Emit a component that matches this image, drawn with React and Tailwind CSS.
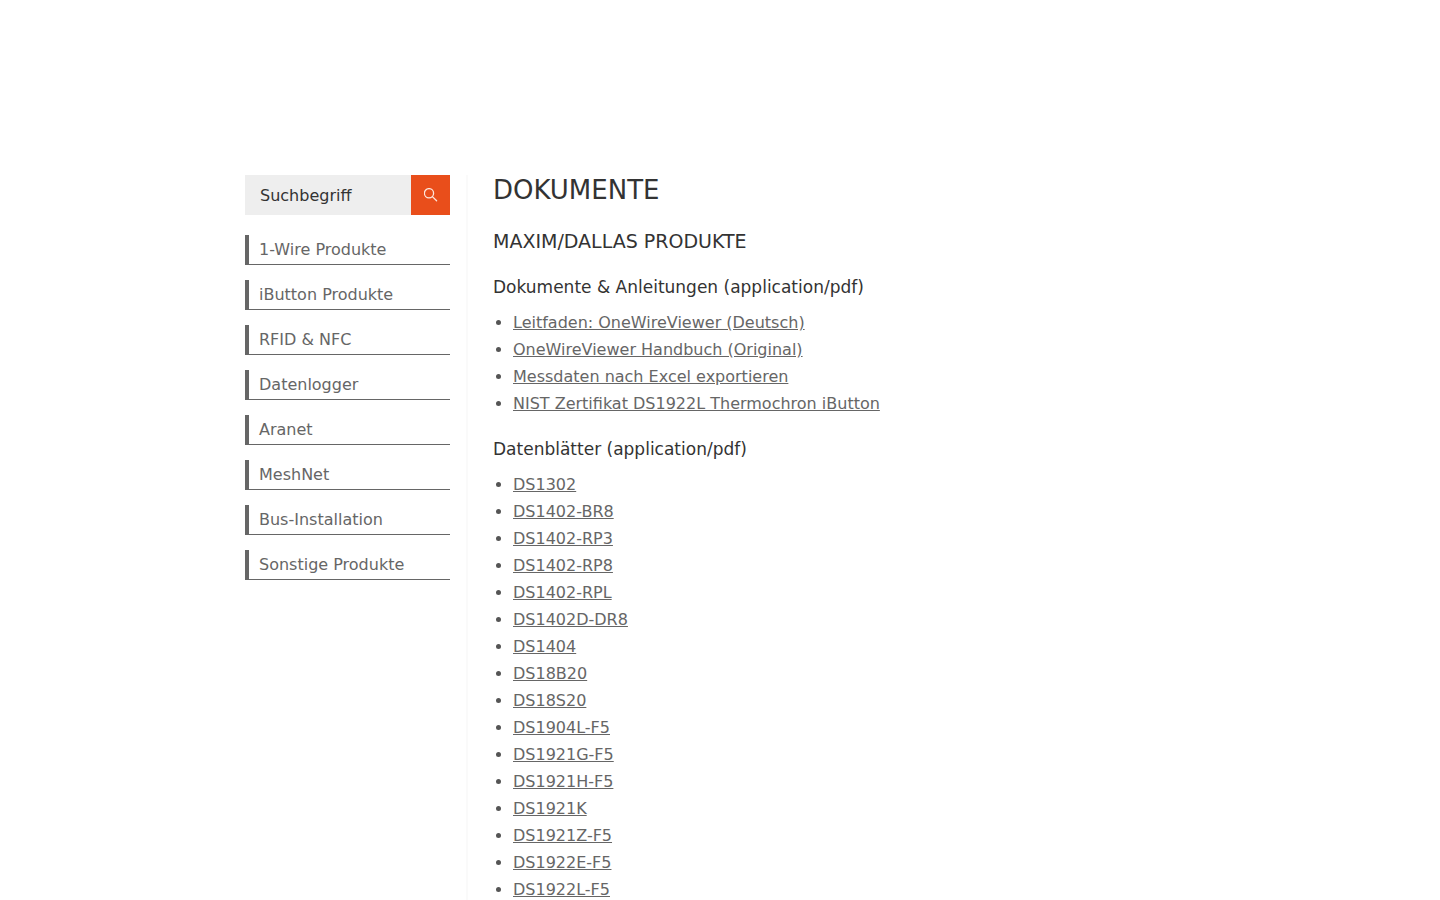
const categories = [
  '1-Wire Produkte',
  'iButton Produkte',
  'RFID & NFC',
  'Datenlogger',
  'Aranet',
  'MeshNet',
  'Bus-Installation',
  'Sonstige Produkte',
];

const guides = [
  'Leitfaden: OneWireViewer (Deutsch)',
  'OneWireViewer Handbuch (Original)',
  'Messdaten nach Excel exportieren',
  'NIST Zertifikat DS1922L Thermochron iButton',
];

const datasheets = [
  'DS1302',
  'DS1402-BR8',
  'DS1402-RP3',
  'DS1402-RP8',
  'DS1402-RPL',
  'DS1402D-DR8',
  'DS1404',
  'DS18B20',
  'DS18S20',
  'DS1904L-F5',
  'DS1921G-F5',
  'DS1921H-F5',
  'DS1921K',
  'DS1921Z-F5',
  'DS1922E-F5',
  'DS1922L-F5',
];

function SearchForm() {
  return (
    <form className="flex h-10" role="search" onSubmit={(e) => e.preventDefault()}>
      <input
        type="search"
        aria-label="Suchbegriff"
        placeholder="Suchbegriff"
        className="min-w-0 flex-1 bg-[#eeeeee] px-[15px] pt-0.5 text-base text-[#333333] outline-none placeholder:text-[#333333]"
      />
      <button
        type="submit"
        aria-label="Suchen"
        className="flex w-[39px] items-center justify-center bg-[#e94e1b] text-[#fde6dc]"
      >
        <svg viewBox="0 0 14 14" className="size-3.5" fill="none" stroke="currentColor" strokeWidth="1.3" strokeLinecap="round">
          <circle cx="5" cy="5.2" r="4.6" />
          <path d="M8.4 8.6 12.6 12.8" />
        </svg>
      </button>
    </form>
  );
}

function DocumentSection({ title, items }) {
  return (
    <section className="mb-[18px]">
      <h3 className="mb-2 text-[17px] leading-7 text-[#333333]">{title}</h3>
      <ul className="list-disc pl-5 leading-[27px]">
        {items.map((item) => (
          <li key={item}>
            <a href="#" className="text-[#666666] underline">{item}</a>
          </li>
        ))}
      </ul>
    </section>
  );
}

export default function App() {
  return (
    <div className="bg-white pt-[175px] font-['DejaVu_Sans',sans-serif] text-base text-[#555555]">
      <div className="mx-auto flex max-w-[950px]">
        <aside className="w-[223px] shrink-0 border-r-2 border-[#fafafa] pr-4">
          <SearchForm />
          <nav className="mt-5 flex flex-col gap-[15px]">
            {categories.map((name) => (
              <a
                key={name}
                href="#"
                className="flex h-[30px] items-center border-b border-l-4 border-[#666666] pl-2.5 leading-6 text-[#666666]"
              >
                {name}
              </a>
            ))}
          </nav>
        </aside>
        <main className="min-w-0 flex-1 pl-[25px]">
          <h1 className="mb-[22px] text-[26px] leading-[30px] text-[#333333]">DOKUMENTE</h1>
          <h2 className="mb-[18px] text-[19px] leading-7 text-[#333333]">MAXIM/DALLAS PRODUKTE</h2>
          <DocumentSection title="Dokumente &amp; Anleitungen (application/pdf)" items={guides} />
          <DocumentSection title="Datenblätter (application/pdf)" items={datasheets} />
        </main>
      </div>
    </div>
  );
}
